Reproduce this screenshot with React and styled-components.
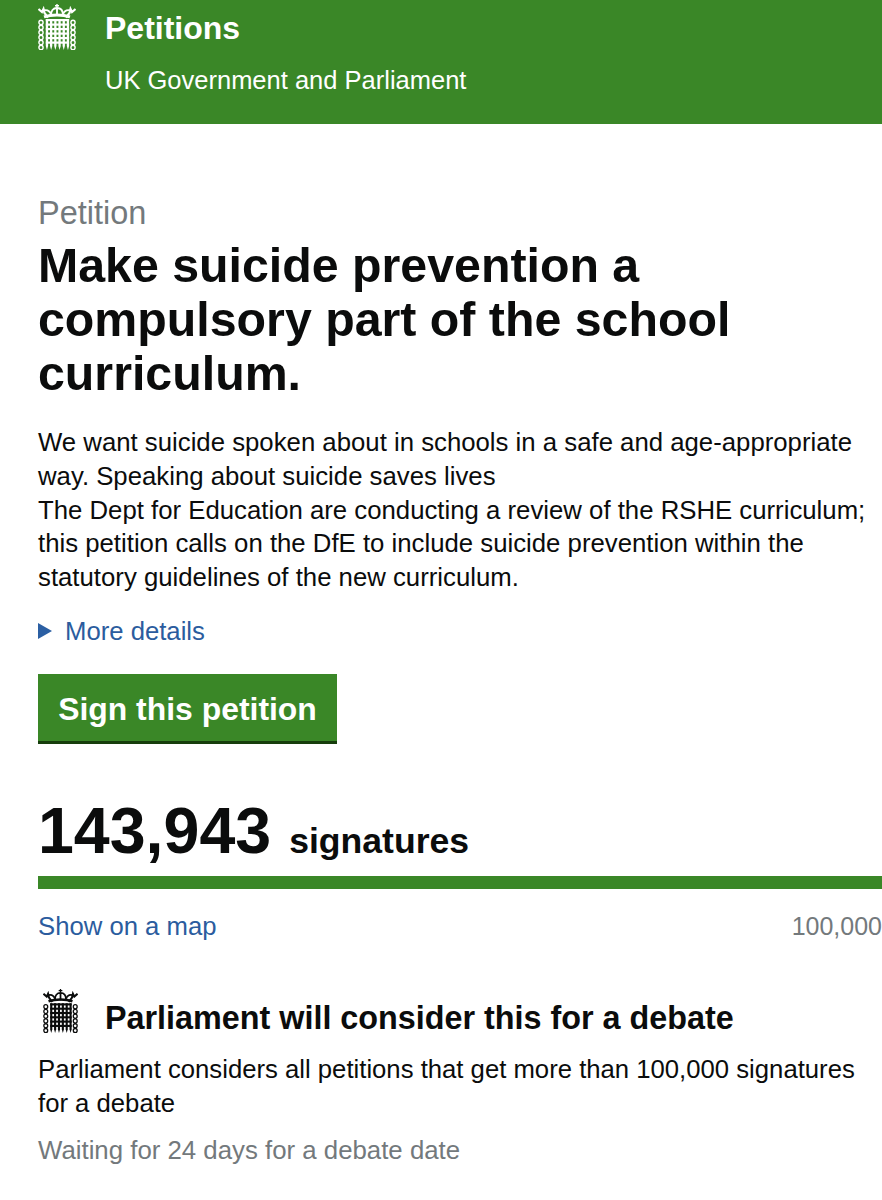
import React from 'react';
import styled, { createGlobalStyle } from 'styled-components';

const GlobalStyle = createGlobalStyle`
  html, body {
    margin: 0;
    padding: 0;
    background: #fff;
    overflow-x: hidden;
  }
  body {
    font-family: "Liberation Sans", Arial, sans-serif;
    color: #0b0c0c;
  }
`;

const Page = styled.div`
  width: 882px;
  height: 1200px;
  overflow: hidden;
`;

const Header = styled.header`
  height: 124px;
  box-sizing: border-box;
  background: #3a8727;
  color: #fff;
  display: flex;
  padding: 4px 0 0 38px;
  gap: 29px;
`;

const HeaderText = styled.div`
  display: flex;
  flex-direction: column;
`;

const Brand = styled.div`
  font-size: 32px;
  font-weight: 700;
  line-height: 48px;
`;

const Sub = styled.div`
  font-size: 25.5px;
  line-height: 30px;
  margin-top: 13px;
`;

const Main = styled.main`
  padding: 71px 0 0 38px;
`;

const Caption = styled.div`
  font-size: 32.5px;
  line-height: 36px;
  color: #73797c;
`;

const Title = styled.h1`
  margin: 7px 0 0;
  font-size: 48.3px;
  line-height: 54px;
  font-weight: 700;
  width: 800px;
`;

const Summary = styled.p`
  margin: 26px 0 0;
  font-size: 25.75px;
  line-height: 33.75px;
  width: 830px;
`;

const Details = styled.div`
  display: flex;
  align-items: center;
  gap: 13px;
  margin-top: 19px;
  height: 34px;
`;

const Triangle = styled.span`
  width: 0;
  height: 0;
  border-style: solid;
  border-width: 8px 0 8px 14px;
  border-color: transparent transparent transparent #2b5fa3;
`;

const BlueLink = styled.a`
  color: #2b5c9e;
  font-size: 25.7px;
  line-height: 34px;
`;

const SignButton = styled.button`
  display: block;
  margin: 26px 0 0;
  width: 299px;
  height: 70px;
  border: 0;
  padding: 2px 0 0;
  background: #3a8727;
  box-shadow: inset 0 -3px 0 #163d0c;
  color: #fff;
  font-family: inherit;
  font-size: 31.9px;
  font-weight: 700;
`;

const Count = styled.div`
  display: flex;
  align-items: baseline;
  gap: 18px;
  margin-top: 52px;
  height: 70px;
`;

const Number = styled.span`
  font-size: 64.5px;
  font-weight: 700;
  line-height: 70px;
`;

const Unit = styled.span`
  font-size: 35.6px;
  font-weight: 700;
`;

const Bar = styled.div`
  height: 13px;
  margin-top: 10px;
  background: #3a8727;
`;

const BarLabels = styled.div`
  display: flex;
  justify-content: space-between;
  align-items: baseline;
  margin-top: 20px;
  line-height: 34px;
`;

const Target = styled.span`
  color: #73797c;
  font-size: 25px;
`;

const DebateHead = styled.div`
  display: flex;
  align-items: flex-start;
  gap: 27px;
  margin-top: 44px;
  padding-left: 5px;
`;

const DebateTitle = styled.h2`
  margin: 0;
  font-size: 32.35px;
  font-weight: 700;
  line-height: 62px;
`;

const DebateText = styled.p`
  margin: 3px 0 0;
  font-size: 25.7px;
  line-height: 34px;
  width: 830px;
`;

const Waiting = styled.p`
  margin: 13px 0 0;
  font-size: 25.8px;
  line-height: 34px;
  color: #73797c;
`;

const IconSvg = styled.svg`
  flex: none;
  display: block;
  margin-top: ${(p) => p.$top || 0}px;
`;

const LINK_ROWS = [17, 22, 27, 32, 37, 42];
const GATE_BARS = [0, 1, 2, 3, 4, 5];
const GATE_RAILS = [15, 19.5, 24, 28.5, 33, 37.5];

// houses of parliament portcullis, drawn in one colour
function Portcullis({ color, width, height, top }) {
  return (
    <IconSvg $top={top} width={width} height={height} viewBox="0 0 38 46" fill="none" stroke={color} preserveAspectRatio="none">
      {/* crown: cross, arches and fleurs */}
      <path strokeWidth="1.400" d="M19 0v3.500M17 1.700h4" />
      <path strokeWidth="1.900" d="M19 4c-4 0-6 3-6 7M19 4c4 0 6 3 6 7M19 4v8" />
      <path strokeWidth="1.900" d="M13 10c-1.500-3.500-5-5-8.500-3M25 10c1.500-3.500 5-5 8.500-3" />
      <path strokeWidth="2.200" d="M0.500 5l3.500 3 1.500-3 1 4 3.500 4.500M37.500 5l-3.500 3-1.500-3-1 4-3.500 4.500" />
      <path strokeWidth="2.800" d="M6 12.800c7.500-2.400 18.500-2.400 26 0" />
      {/* side chains */}
      {LINK_ROWS.map((y) => (
        <React.Fragment key={y}>
          <ellipse cx="3" cy={y + 1.500} rx="2.100" ry="2.200" strokeWidth="1.400" />
          <ellipse cx="35" cy={y + 1.500} rx="2.100" ry="2.200" strokeWidth="1.400" />
        </React.Fragment>
      ))}
      {/* gate lattice */}
      {GATE_BARS.map((i) => (
        <path key={i} fill={color} stroke="none" d={`M${7.800 + i * 4.200} 15h2.300v27l-1.150 4-1.150-4z`} />
      ))}
      {GATE_RAILS.map((y) => (
        <rect key={y} x="7.800" y={y} width="23.300" height="2.200" fill={color} stroke="none" />
      ))}
    </IconSvg>
  );
}

export default function App() {
  return (
    <Page>
      <GlobalStyle />
      <Header>
        <Portcullis color="#fff" width={38} height={46} />
        <HeaderText>
          <Brand>Petitions</Brand>
          <Sub>UK Government and Parliament</Sub>
        </HeaderText>
      </Header>
      <Main>
        <Caption>Petition</Caption>
        <Title>Make suicide prevention a compulsory part of the school curriculum.</Title>
        <Summary>
          We want suicide spoken about in schools in a safe and age-appropriate way. Speaking about suicide saves lives
          <br />
          The Dept for Education are conducting a review of the RSHE curriculum; this petition calls on the DfE to include suicide prevention within the statutory guidelines of the new curriculum.
        </Summary>
        <Details>
          <Triangle />
          <BlueLink>More details</BlueLink>
        </Details>
        <SignButton>Sign this petition</SignButton>
        <Count>
          <Number>143,943</Number>
          <Unit>signatures</Unit>
        </Count>
        <Bar />
        <BarLabels>
          <BlueLink>Show on a map</BlueLink>
          <Target>100,000</Target>
        </BarLabels>
        <DebateHead>
          <Portcullis color="#0b0c0c" width={35} height={44} top={2} />
          <DebateTitle>Parliament will consider this for a debate</DebateTitle>
        </DebateHead>
        <DebateText>Parliament considers all petitions that get more than 100,000 signatures for a debate</DebateText>
        <Waiting>Waiting for 24 days for a debate date</Waiting>
      </Main>
    </Page>
  );
}
